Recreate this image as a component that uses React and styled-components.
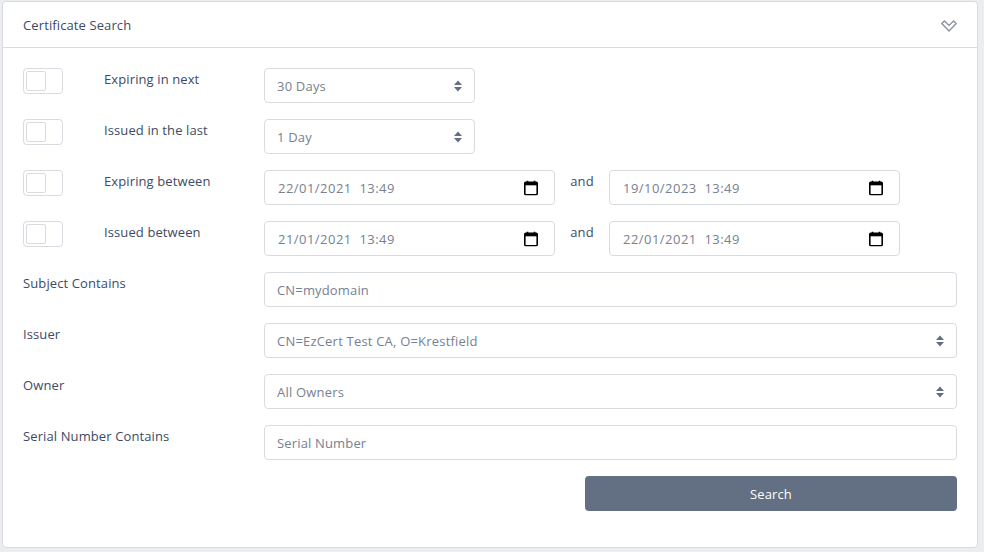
import React from "react";
import styled, { createGlobalStyle } from "styled-components";

const Global = createGlobalStyle`
  html, body { margin: 0; padding: 0; background: #ebedef; }
  body { font-family: "Open Sans", "Noto Sans", sans-serif; font-size: 13px; color: #3c4b64; letter-spacing: 0.11px; }
`;
const Page = styled.div`
  width: 984px; height: 552px; box-sizing: border-box; padding: 1px 6px 4px 2px; overflow: hidden;
`;
const Card = styled.section`
  height: 100%; box-sizing: border-box; background: #fff; border: 1px solid #d8dbe0; border-radius: 4px;
  display: flex; flex-direction: column;
`;
const Header = styled.header`
  height: 46px; box-sizing: border-box; border-bottom: 1px solid #d8dbe0; flex: none;
  display: flex; align-items: center; justify-content: space-between; padding: 0 20px 0 20px;
`;
const Title = styled.h1`
  margin: 0; font-size: 13px; font-weight: 400; color: #3c4b64;
`;
const Body = styled.div`
  padding: 20px 20px 0; display: flex; flex-direction: column; gap: 16px;
`;
const Row = styled.div`
  display: flex; height: 35px; align-items: flex-start;
`;
const ToggleBox = styled.div`
  width: 40px; height: 26px; box-sizing: border-box; border: 1px solid #d8dbe0; border-radius: 4px;
  margin-right: 41px; padding: 2px; flex: none;
`;
const Knob = styled.div`
  width: 20px; height: 20px; box-sizing: border-box; border: 1px solid #d8dbe0; border-radius: 2px; background: #fff;
`;
const Label = styled.label`
  width: ${p => p.$w}px; flex: none; line-height: 20px; padding-top: 1px; color: #3c4b64;
`;
const Control = styled.div`
  position: relative; box-sizing: border-box; height: 35px; flex: ${p => (p.$w ? "none" : "1")};
  width: ${p => (p.$w ? `${p.$w}px` : "auto")};
`;
const TextInput = styled.input`
  width: 100%; height: 100%; box-sizing: border-box; border: 1px solid #d8dbe0; border-radius: 4px;
  padding: 0 12px; font: inherit; letter-spacing: 0.16px; color: #768192; background: #fff; outline: none;
  &::placeholder { color: #768192; opacity: 1; }
`;
const DateInput = styled(TextInput)`
  padding-left: 13px; letter-spacing: 0.47px;
`;
const Select = styled.select`
  width: 100%; height: 100%; box-sizing: border-box; border: 1px solid #d8dbe0; border-radius: 4px;
  padding: 0 12px; font: inherit; letter-spacing: 0.2px; color: #768192; background: #fff; outline: none; appearance: none;
`;
const Overlay = styled.svg`
  position: absolute; top: 50%; transform: translateY(-50%); right: ${p => p.$r}px; pointer-events: none;
`;
const And = styled.span`
  width: 54px; flex: none; text-align: center; line-height: 20px; padding-top: 1px;
`;
const SearchButton = styled.button`
  width: 372px; height: 35px; align-self: flex-end; border: 0; border-radius: 4px; background: #636f83;
  color: #fff; font: inherit; letter-spacing: inherit; cursor: pointer;
`;
const ChevronIcon = styled.svg`
  margin-top: 2px;
`;

const Carets = () => (
  <Overlay $r={13} width="8" height="12" viewBox="0 0 8 12">
    <path d="M4 0.5 L8 5 H0 Z M0 7 H8 L4 11.5 Z" fill="#636f83" />
  </Overlay>
);
const Calendar = () => (
  <Overlay $r={17} width="14" height="15" viewBox="0 0 14 15">
    <path d="M3.5 0v2M10.5 0v2" stroke="#000" strokeWidth="1.6" fill="none" />
    <rect x="0.8" y="1.8" width="12.4" height="12.4" rx="1" fill="none" stroke="#000" strokeWidth="1.6" />
    <rect x="0.8" y="1.8" width="12.4" height="3" fill="#000" />
  </Overlay>
);
const Chevrons = () => (
  <ChevronIcon width="16" height="12" viewBox="0 0 16 12" fill="none">
    <path d="M0.8 3.6 L3.4 1 L8 5.4 L12.6 1 L15.2 3.6 L8 11 Z" stroke="#8a93a5" strokeWidth="1.4" />
  </ChevronIcon>
);

const Toggle = () => <ToggleBox><Knob /></ToggleBox>;
const DateField = ({ value }) => (
  <Control $w={291}>
    <DateInput readOnly value={value} />
    <Calendar />
  </Control>
);
const Choice = ({ w, value }) => (
  <Control $w={w}>
    <Select defaultValue={value}><option>{value}</option></Select>
    <Carets />
  </Control>
);

export default function App() {
  return (
    <Page>
      <Global />
      <Card>
        <Header>
          <Title>Certificate Search</Title>
          <Chevrons />
        </Header>
        <Body>
          <Row><Toggle /><Label $w={160}>Expiring in next</Label><Choice w={211} value="30 Days" /></Row>
          <Row><Toggle /><Label $w={160}>Issued in the last</Label><Choice w={211} value="1 Day" /></Row>
          <Row><Toggle /><Label $w={160}>Expiring between</Label><DateField value="22/01/2021  13:49" /><And>and</And><DateField value="19/10/2023  13:49" /></Row>
          <Row><Toggle /><Label $w={160}>Issued between</Label><DateField value="21/01/2021  13:49" /><And>and</And><DateField value="22/01/2021  13:49" /></Row>
          <Row><Label $w={241}>Subject Contains</Label><Control><TextInput readOnly value="CN=mydomain" /></Control></Row>
          <Row><Label $w={241}>Issuer</Label><Control><Select><option>CN=EzCert Test CA, O=Krestfield</option></Select><Carets /></Control></Row>
          <Row><Label $w={241}>Owner</Label><Control><Select><option>All Owners</option></Select><Carets /></Control></Row>
          <Row><Label $w={241}>Serial Number Contains</Label><Control><TextInput placeholder="Serial Number" /></Control></Row>
          <SearchButton>Search</SearchButton>
        </Body>
      </Card>
    </Page>
  );
}
